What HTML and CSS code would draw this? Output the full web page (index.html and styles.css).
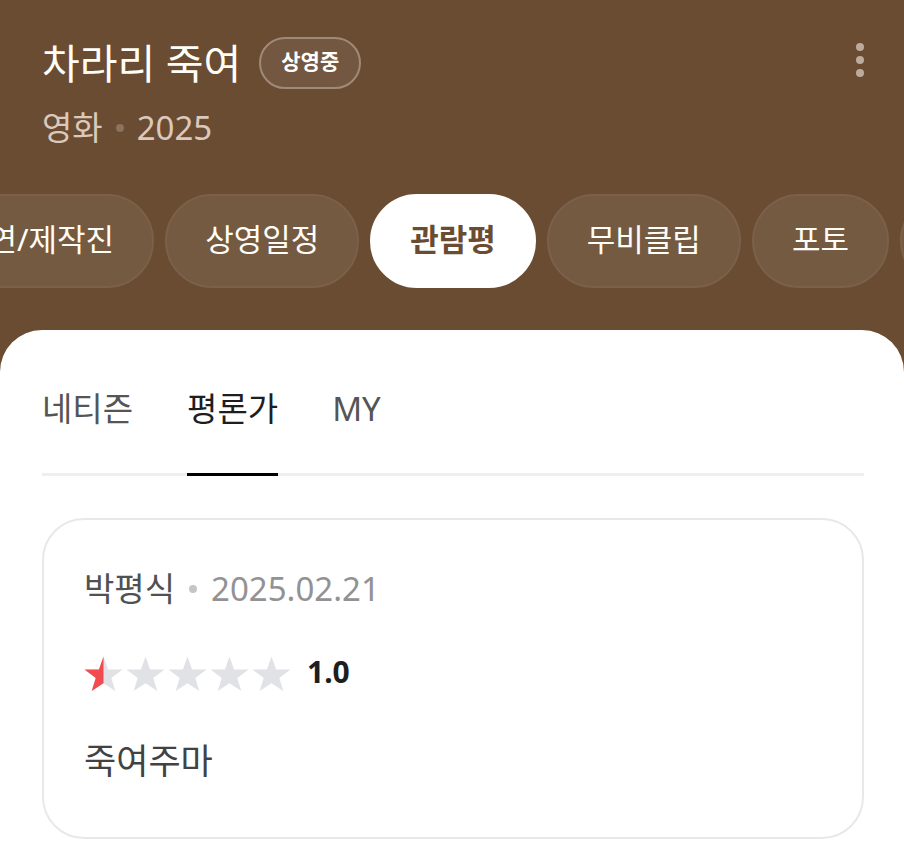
FILE: index.html
```html
<!DOCTYPE html>
<html lang="ko">
<head>
<meta charset="utf-8">
<meta name="viewport" content="width=device-width, initial-scale=1">
<title>차라리 죽여</title>
<link rel="stylesheet" href="styles.css">
</head>
<body>
<header class="hero">
  <div class="title-row">
    <h1 class="title">차라리 죽여</h1>
    <span class="badge">상영중</span>
    <button class="more" type="button" aria-label="더보기">
      <svg width="8" height="34" viewBox="0 0 8 34" fill="currentColor"><circle cx="4" cy="4" r="4"/><circle cx="4" cy="17" r="4"/><circle cx="4" cy="30" r="4"/></svg>
    </button>
  </div>
  <p class="meta"><span>영화</span><i class="dot"></i><span>2025</span></p>
  <nav class="chips">
    <a class="chip" href="#cast">출연/제작진</a>
    <a class="chip" href="#schedule">상영일정</a>
    <a class="chip chip-active" href="#reviews" aria-current="page">관람평</a>
    <a class="chip" href="#clips">무비클립</a>
    <a class="chip" href="#photos">포토</a>
    <a class="chip" href="#lines">명대사</a>
  </nav>
</header>
<main class="sheet" id="reviews">
  <div class="tabs" role="tablist">
    <button class="tab" type="button" role="tab" aria-selected="false">네티즌</button>
    <button class="tab tab-active" type="button" role="tab" aria-selected="true">평론가</button>
    <button class="tab" type="button" role="tab" aria-selected="false">MY</button>
  </div>
  <article class="card">
    <p class="byline"><span>박평식</span><i class="dot"></i><time datetime="2025-02-21">2025.02.21</time></p>
    <div class="rating">
      <svg class="stars" width="210" height="38" viewBox="0 0 210 38" aria-hidden="true">
        <defs>
          <path id="star" d="M19.500 1.500 24.100 14.500H38.500L27.300 22.900 31.300 36 19.500 28.200 7.700 36 11.700 22.900.500 14.500H14.900Z"/>
          <clipPath id="half"><path d="M0 0H19.500V38H0Z"/></clipPath>
        </defs>
        <g fill="#e1e2e6"><use href="#star"/><use href="#star" x="42"/><use href="#star" x="84"/><use href="#star" x="126"/><use href="#star" x="168"/></g>
        <use href="#star" fill="#f14b50" clip-path="url(#half)"/>
      </svg>
      <strong class="score">1.0</strong>
    </div>
    <p class="comment">죽여주마</p>
  </article>
</main>
</body>
</html>
```
FILE: styles.css
```css
* {
  box-sizing: border-box;
}

body {
  margin: 0;
  background: #6a4c32;
  font-family: "Noto Sans", "Noto Sans CJK KR", sans-serif;
  overflow-x: hidden;
}

h1,
p {
  margin: 0;
}

.hero {
  padding: 36px 0 42px;
  color: #fffdf8;
}

.title-row {
  display: flex;
  align-items: center;
  gap: 18px;
  height: 54px;
  padding: 0 40px 0 42px;
}

.title {
  font-size: 41px;
  line-height: 54px;
  font-weight: 400;
  white-space: nowrap;
}

.badge {
  padding: 0 20px 4px;
  border: 2px solid #a08a77;
  border-radius: 26px;
  background: #735740;
  font-size: 21px;
  line-height: 44px;
  font-weight: 700;
  white-space: nowrap;
}

.more {
  display: flex;
  margin: 0 0 6px auto;
  padding: 0;
  border: 0;
  background: none;
  color: #bcab9c;
}

.meta,
.byline {
  display: flex;
  align-items: center;
  font-size: 33px;
  line-height: 48px;
}

.meta {
  gap: 13px;
  padding: 14px 42px 0;
  color: #dac9bc;
}

.dot {
  width: 8px;
  height: 8px;
  border-radius: 50%;
  background: #8c735e;
}

.chips {
  display: flex;
  gap: 11px;
  margin: 42px 0 0 -80px;
  overflow: hidden;
}

.chip {
  flex: none;
  padding: 0 38px 4px;
  border: 2px solid #7c6049;
  border-radius: 47px;
  background: #745a41;
  color: inherit;
  font-size: 31px;
  line-height: 86px;
  text-decoration: none;
  white-space: nowrap;
}

.chip-active {
  border-color: #fff;
  background: #fff;
  color: #6a4c32;
  font-weight: 700;
}

.sheet {
  min-height: calc(100vh - 330px);
  padding: 42px 40px 20px 42px;
  border-radius: 42px 42px 0 0;
  background: #fff;
}

.tabs {
  display: flex;
  gap: 54px;
  box-shadow: inset 0 -3px #efefef;
}

.tab {
  padding: 12px 0 40px;
  border: 0;
  border-bottom: 3px solid transparent;
  background: none;
  color: #555;
  font-family: inherit;
  font-size: 33px;
  line-height: 49px;
}

.tab-active {
  border-color: #000;
  color: #1e1e1e;
}

.card {
  margin-top: 42px;
  padding: 45px 40px 50px;
  border: 2px solid #e8e8e8;
  border-radius: 42px;
}

.byline {
  gap: 14px;
  color: #505152;
}

.byline .dot {
  background: #c5c5c5;
}

.byline time {
  color: #929294;
}

.rating {
  display: flex;
  align-items: center;
  gap: 13px;
  margin-top: 36px;
  height: 50px;
}

.score {
  padding-bottom: 4px;
  color: #1e1e1e;
  font-size: 30px;
  line-height: 40px;
}

.comment {
  margin-top: 36px;
  color: #424242;
  font-size: 35px;
  line-height: 52px;
}
```
